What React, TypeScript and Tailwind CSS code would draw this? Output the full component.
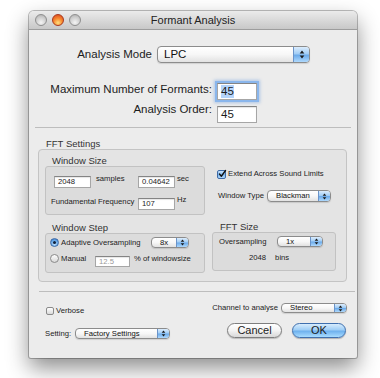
import React from 'react';

function Arrows({ big }: { big?: boolean }) {
  return (
    <svg viewBox="0 0 6 10" className={big ? 'h-[9px] w-[6px]' : 'h-[7px] w-[5px]'}>
      <path d="M3 0.6 L5.6 3.9 H0.4 Z M3 9.4 L5.6 6.1 H0.4 Z" fill="#1b1b1b" />
    </svg>
  );
}

function Popup({ label, className, big }: { label: string; className: string; big?: boolean }) {
  return (
    <div
      className={`flex shrink-0 overflow-hidden rounded-[4px] border border-[#8c8c8c] bg-gradient-to-b from-white via-[#f7f7f7] to-[#e2e2e2] shadow-[0_1px_1px_rgba(0,0,0,0.12)] ${className}`}
    >
      <span
        className={`flex flex-1 items-center text-[#111] ${
          big ? 'pl-[6px] text-[11.5px]' : 'pl-[8px] text-[7.7px]'
        } leading-none`}
      >
        {label}
      </span>
      <span
        className={`flex items-center justify-center border-l border-[#6b93c8] bg-[linear-gradient(to_bottom,#dcedfd_0%,#a2cdf5_45%,#6cabea_55%,#afd9fd_100%)] ${
          big ? 'w-[16px]' : 'w-[12px]'
        }`}
      >
        <Arrows big={big} />
      </span>
    </div>
  );
}

function Field({
  children,
  className,
  focus,
}: {
  children?: React.ReactNode;
  className: string;
  focus?: boolean;
}) {
  return (
    <div
      className={`flex shrink-0 items-center border border-[#a6a6a6] border-t-[#848484] bg-white ${
        focus
          ? 'shadow-[0_0_0_2px_#8ab6ec,0_0_3px_3px_rgba(80,140,220,0.4)]'
          : 'shadow-[inset_0_1px_1px_rgba(0,0,0,0.1)]'
      } ${className}`}
    >
      {children}
    </div>
  );
}

function Radio({ on, className = '' }: { on?: boolean; className?: string }) {
  return on ? (
    <span
      className={`flex size-[9px] shrink-0 items-center justify-center rounded-full border border-[#3d6aa6] bg-[radial-gradient(circle_at_50%_70%,#c4e4fe_0%,#62a4e6_60%,#3372c2_100%)] ${className}`}
    >
      <span className="size-[3px] rounded-full bg-[#0f203c]" />
    </span>
  ) : (
    <span
      className={`block size-[9px] shrink-0 rounded-full border border-[#8a8a8a] bg-gradient-to-b from-[#fdfdfd] to-[#d8d8d8] ${className}`}
    />
  );
}

function Checkbox({ on, className }: { on?: boolean; className: string }) {
  return on ? (
    <span
      className={`flex shrink-0 items-center justify-center rounded-[2px] border border-[#3d6aa6] bg-gradient-to-b from-[#cbe5fd] via-[#7db7ef] to-[#acd5fb] ${className}`}
    >
      <svg viewBox="0 0 10 10" className="size-[8px] overflow-visible">
        <path
          d="M1.8 5 L4.2 7.8 L9.4 0.6"
          stroke="#111"
          strokeWidth="1.7"
          fill="none"
          strokeLinecap="round"
          strokeLinejoin="round"
        />
      </svg>
    </span>
  ) : (
    <span
      className={`block shrink-0 rounded-[2px] border border-[#8a8a8a] bg-gradient-to-b from-white to-[#dadada] ${className}`}
    />
  );
}

export default function App() {
  return (
    <div className="h-[378px] w-[380px] overflow-hidden bg-white pl-[29px] pt-[11px] font-['Liberation_Sans',Arial,sans-serif] text-[#1c1c1c]">
      <div className="flex h-[347px] w-[328px] flex-col overflow-hidden rounded-b-[2px] rounded-t-[5px] bg-[#ececec] shadow-[0_0_0_1px_rgba(0,0,0,0.25),0_10px_22px_rgba(0,0,0,0.45)]">
        {/* Title bar */}
        <div className="flex h-[19px] shrink-0 items-center border-b border-[#9d9d9d] bg-gradient-to-b from-[#ebebeb] to-[#c8c8c8]">
          <div className="flex w-[52px] gap-[5px] pl-[6px]">
            <span className="size-[12px] rounded-full border border-[#8e8e8e] bg-[radial-gradient(circle_at_50%_75%,#f4f4f4_0%,#cbcbcb_60%,#a8a8a8_100%)]" />
            <span className="size-[12px] rounded-full border border-[#a8381d] bg-[radial-gradient(circle_at_50%_78%,#ffe07f_0%,#f88c31_45%,#d8401c_100%)]" />
            <span className="size-[12px] rounded-full border border-[#8e8e8e] bg-[radial-gradient(circle_at_50%_75%,#f4f4f4_0%,#cbcbcb_60%,#a8a8a8_100%)]" />
          </div>
          <div className="flex-1 text-center text-[11px] leading-none text-[#222]">Formant Analysis</div>
          <div className="w-[52px]" />
        </div>

        {/* Body */}
        <div className="flex flex-1 flex-col">
          <div className="mt-[16px] flex items-center gap-[5px]">
            <span className="w-[123px] text-right text-[11.5px] leading-[13px]">Analysis Mode</span>
            <Popup big label="LPC" className="h-[17px] w-[153px]" />
          </div>

          <div className="mt-[20px] flex items-start gap-[5px]">
            <span className="w-[183px] text-right text-[11.5px] leading-[13px]">Maximum Number of Formants:</span>
            <Field focus className="h-[17px] w-[40px] pl-[3px] text-[11.5px]">
              <span className="bg-[#b4d4fb] leading-[13px]">45</span>
            </Field>
          </div>
          <div className="mt-[6px] flex items-start gap-[5px]">
            <span className="-mt-[3px] w-[183px] text-right text-[11.5px] leading-[13px]">Analysis Order:</span>
            <Field className="h-[17px] w-[40px] pl-[3px] text-[11.5px]">45</Field>
          </div>

          <div className="mx-[6px] mt-[4px] h-px bg-[#bdbdbd]" />

          {/* FFT Settings */}
          <div className="ml-[17px] mt-[10px] h-[11px] text-[9.5px] leading-[11px] text-[#333]">FFT Settings</div>
          <div className="ml-[9px] flex h-[133px] w-[309px] rounded-[4px] border border-[#c4c4c4] bg-[#e4e4e4] text-[7.7px]">
            {/* Left column */}
            <div className="ml-[6px] flex w-[160px] flex-col pt-[5px]">
              <div className="ml-[7px] h-[11px] text-[9.5px] leading-[11px] text-[#333]">Window Size</div>
              <div className="flex h-[49px] flex-col rounded-[3px] border border-[#c2c2c2] bg-[#dcdcdc]">
                <div className="mt-[9px] flex items-start pl-[8px]">
                  <Field className="h-[12px] w-[37px] pl-[3px]">2048</Field>
                  <span className="-mt-[2px] ml-[5px] w-[42px] leading-[10px]">samples</span>
                  <Field className="h-[12px] w-[37px] pl-[3px]">0.04642</Field>
                  <span className="-mt-[2px] ml-[2px] leading-[10px]">sec</span>
                </div>
                <div className="mt-[10px] flex items-start pl-[5px]">
                  <span className="-mt-[1px] w-[87px] leading-[10px]">Fundamental Frequency</span>
                  <Field className="h-[12px] w-[37px] pl-[3px]">107</Field>
                  <span className="-mt-[3px] ml-[2px] leading-[10px]">Hz</span>
                </div>
              </div>

              <div className="ml-[7px] mt-[7px] h-[11px] text-[9.5px] leading-[11px] text-[#333]">Window Step</div>
              <div className="flex h-[40px] flex-col rounded-[3px] border border-[#c2c2c2] bg-[#dcdcdc]">
                <div className="mt-[3px] flex h-[11px] items-center pl-[4px]">
                  <Radio on />
                  <span className="ml-[2px] w-[90px] leading-[11px]">Adaptive Oversampling</span>
                  <Popup label="8x" className="h-[11px] w-[38px]" />
                </div>
                <div className="mt-[5px] flex items-start pl-[4px]">
                  <Radio className="mt-[1px]" />
                  <span className="ml-[2px] w-[34px] leading-[11px]">Manual</span>
                  <Field className="mt-[3px] h-[11px] w-[35px] pl-[3px] text-[#9a9a9a]">12.5</Field>
                  <span className="ml-[4px] leading-[11px]">% of windowsize</span>
                </div>
              </div>
            </div>

            {/* Right column */}
            <div className="ml-[7px] flex w-[124px] flex-col pt-[19px]">
              <div className="flex h-[10px] items-center pl-[5px]">
                <Checkbox on className="size-[9px]" />
                <span className="ml-[2px] leading-[10px]">Extend Across Sound Limits</span>
              </div>
              <div className="mt-[11px] flex items-center pl-[6px]">
                <span className="w-[49px]">Window Type</span>
                <Popup label="Blackman" className="h-[12px] w-[64px]" />
              </div>
              <div className="ml-[8px] mt-[19px] h-[11px] text-[9.5px] leading-[11px] text-[#333]">FFT Size</div>
              <div className="flex h-[39px] flex-col rounded-[3px] border border-[#c2c2c2] bg-[#dcdcdc]">
                <div className="mt-[3px] flex items-center pl-[6px]">
                  <span className="w-[58px]">Oversampling</span>
                  <Popup label="1x" className="h-[11px] w-[46px]" />
                </div>
                <div className="mt-[5px] flex pl-[36px] leading-[10px]">
                  <span>2048</span>
                  <span className="ml-[9px]">bins</span>
                </div>
              </div>
            </div>
          </div>

          <div className="ml-[10px] mt-[9px] h-px w-[316px] bg-[#bdbdbd]" />

          {/* Bottom */}
          <div className="flex items-start text-[7.7px]">
            <div className="flex flex-col pl-[17px]">
              <div className="mt-[14px] flex h-[10px] items-center">
                <Checkbox className="size-[8px]" />
                <span className="ml-[2px]">Verbose</span>
              </div>
              <div className="-ml-[1px] mt-[12px] flex h-[11px] items-center">
                <span className="w-[30px]">Setting:</span>
                <Popup label="Factory Settings" className="h-[11px] w-[95px]" />
              </div>
            </div>
            <div className="ml-auto flex flex-col items-end pr-[10px]">
              <div className="mt-[11px] flex h-[10px] items-center">
                <span className="mr-[3px]">Channel to analyse</span>
                <Popup label="Stereo" className="h-[10px] w-[66px]" />
              </div>
              <div className="mr-[1px] mt-[10px] flex gap-[10px] text-[11px] leading-none">
                <button className="flex h-[15px] w-[55px] items-center justify-center rounded-full border border-[#7e7e7e] bg-gradient-to-b from-white via-[#f3f3f3] to-[#d8d8d8] shadow-[0_1px_1px_rgba(0,0,0,0.2)]">
                  Cancel
                </button>
                <button className="flex h-[15px] w-[54px] items-center justify-center rounded-full border border-[#3f6fae] bg-[linear-gradient(to_bottom,#d7ecfd_0%,#9fcef6_45%,#6eb1ee_55%,#a8dcff_100%)] shadow-[0_1px_1px_rgba(0,0,0,0.25)]">
                  OK
                </button>
              </div>
            </div>
          </div>
        </div>
      </div>
    </div>
  );
}
